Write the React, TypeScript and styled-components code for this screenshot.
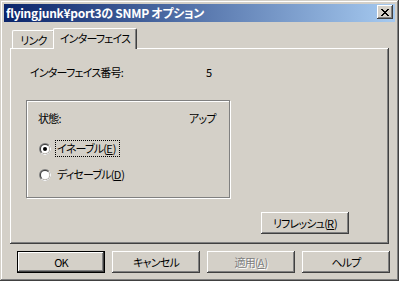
import React from "react";
import styled, { createGlobalStyle } from "styled-components";

const FACE = "#d4d0c8";
const FONT = `"Noto Sans CJK JP", "Noto Sans", sans-serif`;

const Global = createGlobalStyle`
  html, body { margin: 0; padding: 0; background: ${FACE}; }
  body { font-family: ${FONT}; font-size: 11px; color: #000; }
`;

const Window = styled.div`
  width: 399px;
  height: 281px;
  box-sizing: border-box;
  background: ${FACE};
  padding: 4px;
  display: flex;
  flex-direction: column;
  box-shadow: inset -1px -1px #404040, inset 1px 1px ${FACE},
    inset -2px -2px #808080, inset 2px 2px #fff;
  font-size: 11px;
  letter-spacing: -0.8px;
  font-feature-settings: "palt";
`;

const TitleBar = styled.div`
  height: 18px;
  flex: none;
  display: flex;
  align-items: center;
  padding: 0 2px;
  background: linear-gradient(to right, #0a246a, #a6caf0);
  color: #fff;
  font-weight: bold;
  font-size: 12px;
  letter-spacing: -0.3px;
  white-space: nowrap;
`;

const Title = styled.span`
  line-height: 18px;
`;

const CloseButton = styled.div`
  margin-left: auto;
  width: 16px;
  height: 14px;
  margin-top: -2px;
  box-sizing: border-box;
  background: ${FACE};
  display: flex;
  align-items: center;
  justify-content: center;
  box-shadow: inset -1px -1px #404040, inset 1px 1px #fff,
    inset -2px -2px #808080, inset 2px 2px ${FACE};
`;

const Content = styled.div`
  flex: 1;
  display: flex;
  flex-direction: column;
  padding: 6px 6px 4px 6px;
`;

const TabStrip = styled.div`
  height: 20px;
  display: flex;
  align-items: flex-end;
  padding-left: 2px;
`;

const Tab = styled.div<{ $active?: boolean; $w: number }>`
  box-sizing: border-box;
  width: ${(p) => p.$w}px;
  height: ${(p) => (p.$active ? 21 : 18)}px;
  margin: ${(p) => (p.$active ? "0 -2px -1px -2px" : "0")};
  padding-bottom: ${(p) => (p.$active ? 2 : 0)}px;
  border-left: 1px solid #fff;
  border-top: 1px solid #fff;
  border-right: 1px solid #404040;
  border-radius: 2px 2px 0 0;
  box-shadow: inset -1px 0 #808080;
  background: ${FACE};
  position: relative;
  z-index: ${(p) => (p.$active ? 1 : 0)};
  display: flex;
  align-items: center;
  justify-content: center;
  line-height: 14px;
  white-space: nowrap;
`;

const Panel = styled.div`
  height: 196px;
  box-sizing: border-box;
  display: flex;
  flex-direction: column;
  padding: 17px 40px 10px 16px;
  box-shadow: inset -1px -1px #404040, inset 1px 1px #fff,
    inset -2px -2px #808080;
`;

const InfoRow = styled.div`
  display: flex;
  height: 14px;
  line-height: 14px;
  padding-left: 4px;
  white-space: nowrap;
`;

const Label = styled.span<{ $w: number }>`
  width: ${(p) => p.$w}px;
  flex: none;
`;

const GroupBox = styled.div`
  margin-top: 21px;
  width: 204px;
  height: 98px;
  box-sizing: border-box;
  border: 1px solid #808080;
  box-shadow: inset 1px 1px #fff, 1px 1px #fff;
  padding: 10px 0 0 11px;
  display: flex;
  flex-direction: column;
`;

const StatusRow = styled.div`
  display: flex;
  height: 14px;
  line-height: 14px;
  white-space: nowrap;
`;

const RadioList = styled.div`
  margin-top: 15px;
  display: flex;
  flex-direction: column;
  gap: 9px;
`;

const RadioRow = styled.div`
  display: flex;
  align-items: center;
  gap: 4px;
  margin-left: 1px;
  height: 17px;
`;

const RadioLabel = styled.span<{ $focus?: boolean }>`
  border: 1px dotted ${(p) => (p.$focus ? "#000" : "transparent")};
  padding: 0 3px 0 1px;
  line-height: 15px;
  white-space: nowrap;
`;

const Key = styled.u`
  text-decoration: underline;
  text-underline-offset: 1px;
  letter-spacing: 0;
`;

const RefreshRow = styled.div`
  margin-top: auto;
  display: flex;
  justify-content: flex-end;
`;

const Button = styled.button<{ $default?: boolean; $disabled?: boolean }>`
  width: 88px;
  height: 22px;
  box-sizing: border-box;
  padding: 0;
  margin: 0;
  font-family: ${FONT};
  font-size: 11px;
  letter-spacing: -0.8px;
  font-feature-settings: "palt";
  line-height: 14px;
  white-space: nowrap;
  background: ${FACE};
  color: ${(p) => (p.$disabled ? "#808080" : "#000")};
  text-shadow: ${(p) => (p.$disabled ? "1px 1px #fff" : "none")};
  border: ${(p) => (p.$default ? "1px solid #000" : "none")};
  box-shadow: inset -1px -1px #404040, inset 1px 1px #fff,
    inset -2px -2px #808080, inset 2px 2px ${FACE};
  outline: none;
`;

const ButtonRow = styled.div`
  margin-top: 7px;
  display: flex;
  justify-content: flex-end;
  gap: 7px;
  margin-right: -1px;
`;

const CloseGlyph = () => (
  <svg width="8" height="7" viewBox="0 0 8 7" shapeRendering="crispEdges">
    <path
      d="M0 0h2v1h-2z M6 0h2v1h-2z M1 1h2v1h-2z M5 1h2v1h-2z M2 2h4v1h-4z M3 3h2v1h-2z M2 4h4v1h-4z M1 5h2v1h-2z M5 5h2v1h-2z M0 6h2v1h-2z M6 6h2v1h-2z"
      fill="#000"
    />
  </svg>
);

const half = (r: number) => {
  const d = r * Math.SQRT1_2;
  return `M${6 + d} ${6 - d} A${r} ${r} 0 0 1 ${6 - d} ${6 + d} Z`;
};

const RadioIcon = ({ checked }: { checked?: boolean }) => (
  <svg width="12" height="12" viewBox="0 0 12 12">
    <circle cx="6" cy="6" r="6" fill="#808080" />
    <path d={half(6)} fill="#fff" />
    <circle cx="6" cy="6" r="5" fill="#404040" />
    <path d={half(5)} fill={FACE} />
    <circle cx="6" cy="6" r="4" fill="#fff" />
    {checked && <circle cx="6" cy="6" r="2" fill="#000" />}
  </svg>
);

export default function App() {
  return (
    <>
      <Global />
      <Window>
        <TitleBar>
          <Title>flyingjunk¥port3の SNMP オプション</Title>
          <CloseButton>
            <CloseGlyph />
          </CloseButton>
        </TitleBar>
        <Content>
          <TabStrip>
            <Tab $w={43}>リンク</Tab>
            <Tab $w={84} $active>
              インターフェイス
            </Tab>
          </TabStrip>
          <Panel>
            <InfoRow>
              <Label $w={176}>インターフェイス番号:</Label>
              <span>5</span>
            </InfoRow>
            <GroupBox>
              <StatusRow>
                <Label $w={151}>状態:</Label>
                <span>アップ</span>
              </StatusRow>
              <RadioList>
                <RadioRow>
                  <RadioIcon checked />
                  <RadioLabel $focus>
                    イネーブル(<Key>E</Key>)
                  </RadioLabel>
                </RadioRow>
                <RadioRow>
                  <RadioIcon />
                  <RadioLabel>
                    ディセーブル(<Key>D</Key>)
                  </RadioLabel>
                </RadioRow>
              </RadioList>
            </GroupBox>
            <RefreshRow>
              <Button>
                リフレッシュ(<Key>R</Key>)
              </Button>
            </RefreshRow>
          </Panel>
          <ButtonRow>
            <Button $default>OK</Button>
            <Button>キャンセル</Button>
            <Button $disabled>
              適用(<Key>A</Key>)
            </Button>
            <Button>ヘルプ</Button>
          </ButtonRow>
        </Content>
      </Window>
    </>
  );
}
